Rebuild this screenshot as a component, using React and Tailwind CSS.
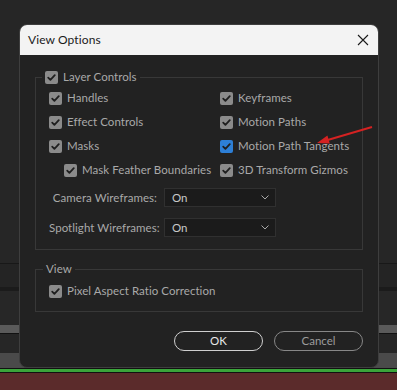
import React from "react";

const font = { fontFamily: 'Lato, "Noto Sans", sans-serif' };

function Check({ blue = false }) {
  return (
    <span
      className={
        "inline-flex w-[13px] h-[13px] shrink-0 items-center justify-center rounded-[2px] " +
        (blue ? "bg-[#2d7fd6]" : "bg-[#8b8b8b]")
      }
    >
      <svg width="11" height="11" viewBox="0 0 11 11">
        <path d="M2.2 5.6 L4.4 7.8 L8.8 3.2" fill="none" stroke="#1f1f1f" strokeWidth="1.8" strokeLinecap="round" strokeLinejoin="round" />
      </svg>
    </span>
  );
}

function Item({ label, blue, indent }) {
  return (
    <div className={"flex h-[24px] items-center gap-[5px] " + (indent ? "pl-[15px]" : "")}>
      <Check blue={blue} />
      <span className="text-[11.5px] tracking-[0.05px] text-[#a9a9a9] whitespace-nowrap">{label}</span>
    </div>
  );
}

function Select({ label }) {
  return (
    <div className="flex items-center gap-[7px]">
      <span className="w-[108px] text-right text-[11.5px] tracking-[0.05px] text-[#a9a9a9] whitespace-nowrap">{label}</span>
      <div className="flex h-[19px] w-[112px] items-center justify-between border border-[#303030] bg-[#1b1b1b] pl-[7px] pr-[6px]">
        <span className="text-[11.5px] text-[#c9c9c9]">On</span>
        <svg width="8" height="5" viewBox="0 0 8 5">
          <path d="M0.5 0.5 L4 4 L7.5 0.5" fill="none" stroke="#a8a8a8" strokeWidth="1" />
        </svg>
      </div>
    </div>
  );
}

export default function App() {
  return (
    <div className="relative h-[390px] w-[397px] overflow-hidden bg-[#252525]" style={font}>
      <div className="flex h-full flex-col">
        <div className="h-[263px] bg-[#262626]" />
        <div className="h-[1px] bg-[#181818]" />
        <div className="h-[23px] bg-[#242424]" />
        <div className="h-[4px] bg-[#1b1b1b]" />
        <div className="h-[34px] bg-[#272727]" />
        <div className="h-[8px] bg-[#5a5a5a]" />
        <div className="h-[1px] bg-[#111]" />
        <div className="h-[19px] bg-[#262626]" />
        <div className="h-[15px] bg-[#4a4a4a]" />
        <div className="h-[1px] bg-[#111]" />
        <div className="h-[3px] bg-[#3aa53a]" />
        <div className="h-[1px] bg-[#111]" />
        <div className="flex-1 bg-[#5b2b2b]" />
      </div>

      <div className="absolute left-[19px] top-[24px] flex h-[344px] w-[360px] flex-col overflow-hidden rounded-[8px] border border-[#3e3e3e] bg-[#222222]">
        <div className="flex h-[30px] shrink-0 items-center justify-between bg-[#f3f3f3] pl-[8px] pr-[9px]">
          <span className="text-[12px] tracking-[0.1px] text-[#1a1a1a]">View Options</span>
          <svg width="12" height="12" viewBox="0 0 12 12">
            <path d="M1 1 L11 11 M11 1 L1 11" stroke="#1a1a1a" strokeWidth="1.1" />
          </svg>
        </div>

        <div className="flex flex-col px-[15px]">
          <fieldset className="mt-[15px] border border-[#383838] pb-[12px] pl-[13px] pr-[8px] pt-[2px]">
            <legend className="ml-[-7px] px-[3px]">
              <span className="flex h-[14px] items-center gap-[5px]">
                <Check />
                <span className="text-[11.5px] tracking-[0.05px] text-[#a9a9a9]">Layer Controls</span>
              </span>
            </legend>
            <div className="grid grid-cols-[171px_1fr]">
              <Item label="Handles" />
              <Item label="Keyframes" />
              <Item label="Effect Controls" />
              <Item label="Motion Paths" />
              <Item label="Masks" />
              <Item label="Motion Path Tangents" blue />
              <Item label="Mask Feather Boundaries" indent />
              <Item label="3D Transform Gizmos" />
            </div>
            <div className="mt-[6px] flex flex-col gap-[11px]">
              <Select label="Camera Wireframes:" />
              <Select label="Spotlight Wireframes:" />
            </div>
          </fieldset>

          <fieldset className="mt-[12px] border border-[#383838] pb-[8px] pl-[13px] pt-[3px]">
            <legend className="ml-[-6px] px-[3px]">
              <span className="flex h-[14px] items-center text-[11.5px] tracking-[0.05px] text-[#a9a9a9]">View</span>
            </legend>
            <Item label="Pixel Aspect Ratio Correction" />
          </fieldset>

          <div className="mt-[19px] flex justify-end gap-[11px]">
            <button className="flex h-[20px] w-[89px] items-center justify-center rounded-full border border-[#cfcfcf] text-[11.5px] text-[#e8e8e8]">
              OK
            </button>
            <button className="flex h-[20px] w-[89px] items-center justify-center rounded-full border border-[#878787] text-[11.5px] text-[#9c9c9c]">
              Cancel
            </button>
          </div>
        </div>
      </div>

      <svg className="absolute left-0 top-0" width="397" height="390" viewBox="0 0 397 390">
        <line x1="372" y1="127" x2="326" y2="140.5" stroke="#d42222" strokeWidth="2" />
        <polygon points="317,143 327.4,135.6 329.8,143.6" fill="#d42222" />
      </svg>
    </div>
  );
}
